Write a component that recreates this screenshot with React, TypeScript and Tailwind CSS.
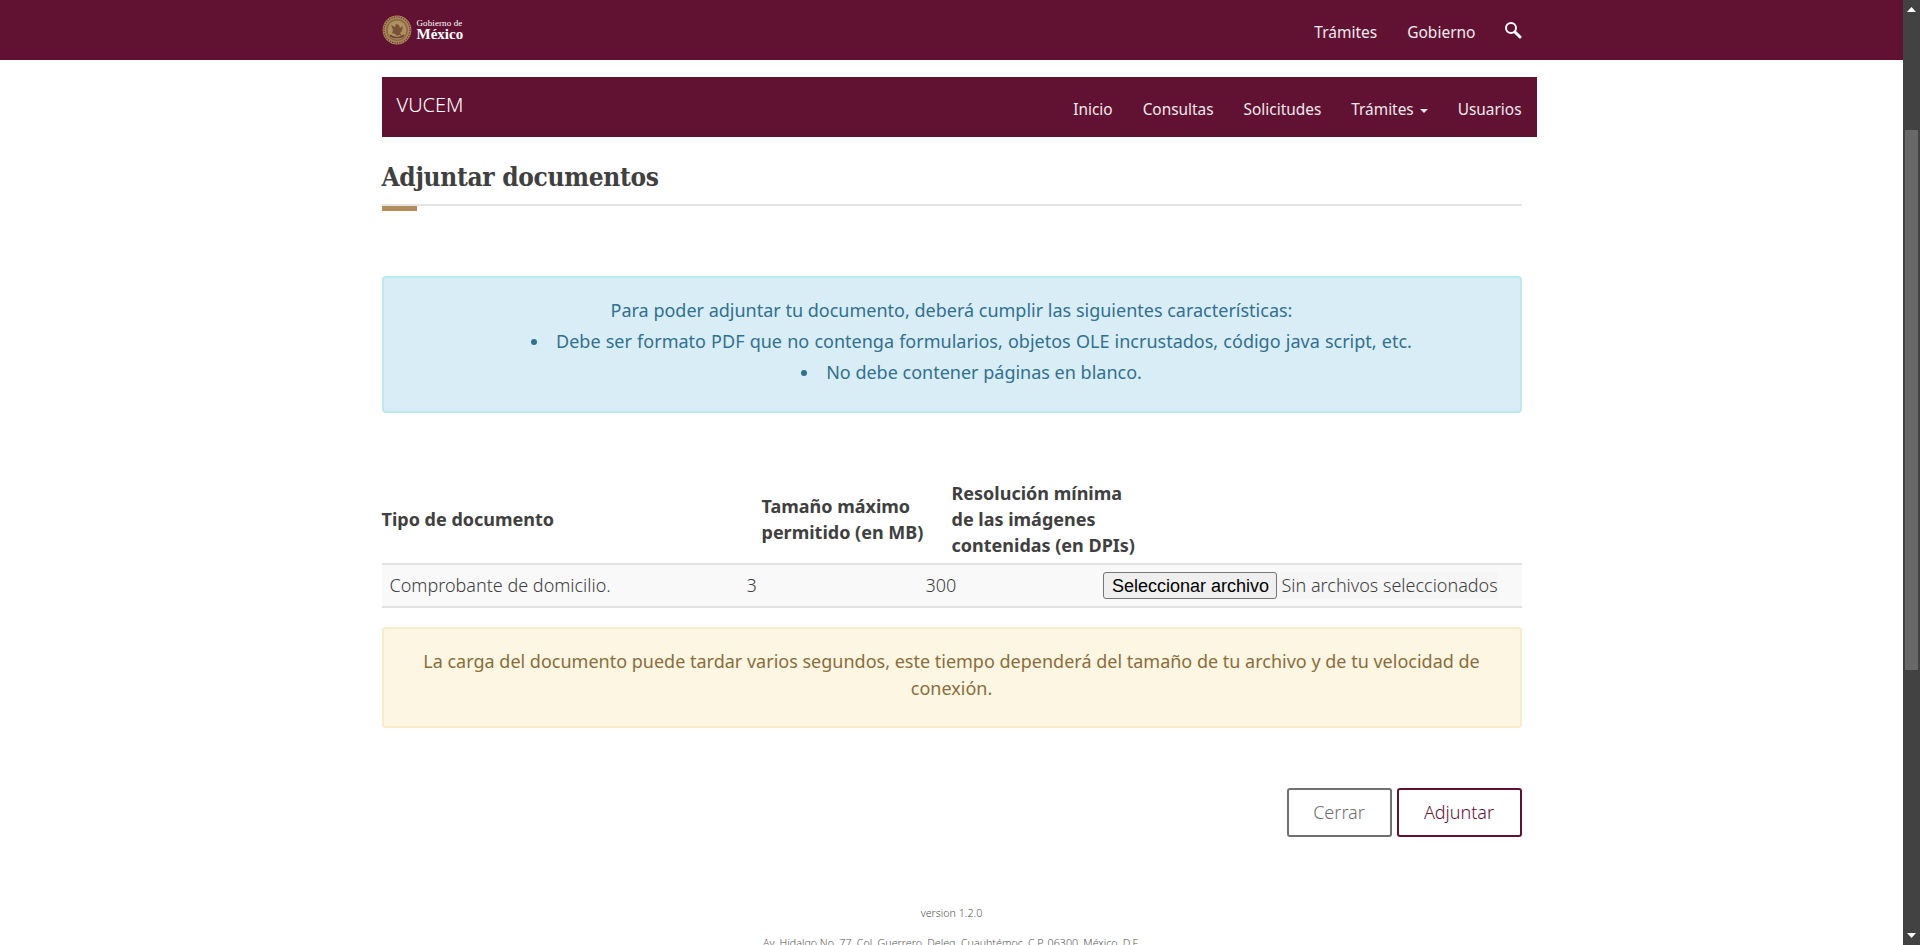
const NOTO = 'font-["Noto_Sans","Open_Sans",sans-serif]';

function Seal() {
  return (
    <svg width="30" height="30" viewBox="0 0 30 30" className="shrink-0">
      <circle cx="15" cy="15" r="14.4" fill="#a9875a" />
      <circle cx="15" cy="15" r="13" fill="none" stroke="#6d2f35" strokeWidth="1.2" strokeDasharray="1.2 1.2" />
      <circle cx="15" cy="15" r="11" fill="#8a6a45" />
      <circle cx="15" cy="15" r="9.4" fill="#b0905f" />
      <path d="M9 10l4 2 1-3 3 1 1 3 3-2-1 5-2 2 2 3-3-1-2 1-2-2-3-1 1-3z" fill="#7a5238" />
      <path d="M8 20c3 3.5 11 3.5 14 0" fill="none" stroke="#6d3a35" strokeWidth="1.2" />
    </svg>
  );
}

function SearchIcon() {
  return (
    <svg width="18" height="18" viewBox="0 0 18 18" fill="none" stroke="#fff" className="block">
      <circle cx="7" cy="7" r="5" strokeWidth="2" />
      <path d="M11 11l5 5" strokeWidth="3" strokeLinecap="round" />
    </svg>
  );
}

function Scrollbar() {
  return (
    <div className="flex w-[17px] shrink-0 flex-col items-center bg-[#424242]">
      <svg width="9" height="5" viewBox="0 0 9 5" className="mt-[7px] shrink-0">
        <path d="M0 5L4.5 0 9 5z" fill="#fff" />
      </svg>
      <div className="mt-[118px] h-[540px] w-[13px] shrink-0 bg-[#686868]" />
      <svg width="9" height="5" viewBox="0 0 9 5" className="mt-auto mb-[7px] shrink-0">
        <path d="M0 0L4.5 5 9 0z" fill="#fff" />
      </svg>
    </div>
  );
}

function App() {
  return (
    <div className={`flex h-[945px] overflow-hidden bg-white text-[#404041] ${NOTO}`}>
      <div className="min-w-0 flex-1 overflow-hidden">
        {/* barra gob.mx */}
        <header className="h-[60px] bg-[#611232] text-white">
          <div className="mx-auto flex h-full w-[1140px] items-center justify-between">
            <div className="flex items-center gap-[5px]">
              <Seal />
              <div className='font-["Liberation_Serif",serif] leading-none'>
                <div className="text-[9px] leading-[9px] tracking-[0.1px]">Gobierno de</div>
                <div className="text-[15px] leading-[13px] font-bold">México</div>
              </div>
            </div>
            <nav className="flex items-center text-[15.5px] text-[#f3e9ee]">
              <a className="mt-[6px] mr-[30px]">Trámites</a>
              <a className="mt-[6px] mr-[28px]">Gobierno</a>
              <SearchIcon />
            </nav>
          </div>
        </header>

        <main className="mx-auto w-[1140px]">
          {/* subnav */}
          <div className="mt-[17px] mr-[-15px] flex h-[60px] items-start justify-between bg-[#611232] px-[15px] text-white">
            <span className="mt-[14px] text-[20px] leading-[28px] font-light">VUCEM</span>
            <nav className="mt-[21px] flex items-center gap-[30px] text-[15.4px] leading-[23px] font-normal text-[#f3e9ee]">
              <a>Inicio</a>
              <a>Consultas</a>
              <a>Solicitudes</a>
              <a className="flex items-center gap-[6px]">
                Trámites
                <span className="mt-[2px] h-0 w-0 border-x-[4px] border-t-[4px] border-x-transparent border-t-[#f3e9ee]" />
              </a>
              <a>Usuarios</a>
            </nav>
          </div>

          <h1 className='mt-[22px] font-["DejaVu_Serif_Condensed","DejaVu_Serif",serif] text-[26px] leading-[36px] font-bold tracking-[-0.3px] text-[#404041]'>
            Adjuntar documentos
          </h1>
          <div className="mt-[9px] h-[2px] bg-[#e4e4e4]" />
          <div className="h-[5px] w-[35px] bg-[#b38e5d]" />

          {/* requisitos */}
          <div className="mt-[65px] h-[137px] rounded-[4px] border-2 border-[#bce8f1] bg-[#d9edf7] pt-[17px] text-center text-[18px] leading-[31px] text-[#31708f]">
            <p>Para poder adjuntar tu documento, deberá cumplir las siguientes características:</p>
            <ul className="list-inside list-disc pl-10">
              <li className="[word-spacing:0.5px]">Debe ser formato PDF que no contenga formularios, objetos OLE incrustados, código java script, etc.</li>
              <li>No debe contener páginas en blanco.</li>
            </ul>
          </div>

          {/* tabla */}
          <div className="mt-[65px] flex h-[85px] items-center pb-[1px] text-[18px] leading-[25.7px] font-bold text-[#404041]">
            <div className="w-[380px]">Tipo de documento</div>
            <div className="w-[190px]">
              Tamaño máximo
              <br />
              permitido (en MB)
            </div>
            <div>
              Resolución mínima
              <br />
              de las imágenes
              <br />
              contenidas (en DPIs)
            </div>
          </div>
          <div className="flex h-[45px] items-center border-y-2 border-[#e2e2e2] bg-[#f9f9f9] pb-[1px] pl-[8px] text-[18px] font-light text-[#404041]">
            <div className="w-[357px]">Comprobante de domicilio.</div>
            <div className="w-[179px]">3</div>
            <div className="w-[177px]">300</div>
            <div className="flex items-center bg-[#f6f6f6]">
              <button className="h-[27px] w-[174px] rounded-[3px] border border-[#767676] bg-[#efefef] pl-[2px] font-['Liberation_Sans',Arial,sans-serif] text-[18px] font-normal text-black">
                Seleccionar archivo
              </button>
              <span className="ml-[5px]">Sin archivos seleccionados</span>
            </div>
          </div>

          {/* aviso */}
          <div className="mt-[19px] flex h-[101px] items-center justify-center rounded-[4px] border-2 border-[#faebcc] bg-[#fdf6e3] px-[30px] pb-[6px] text-center text-[18px] leading-[27px] text-[#8a6d3b]">
            La carga del documento puede tardar varios segundos, este tiempo dependerá del tamaño de tu archivo y de tu velocidad de conexión.
          </div>

          <div className="mt-[60px] flex justify-end gap-[5px] text-[18px]">
            <button className="h-[49px] w-[105px] rounded-[3px] border-2 border-[#707070] bg-white font-light text-[#707070]">
              Cerrar
            </button>
            <button className="h-[49px] w-[125px] rounded-[3px] border-2 border-[#611232] bg-white font-light text-[#611232]">
              Adjuntar
            </button>
          </div>

          <footer className="mt-[68px] text-center text-[10.7px] font-light text-[#555]">
            <p className="leading-[16px]">version 1.2.0</p>
            <p className="mt-[14px] leading-[16px]">Av. Hidalgo No. 77, Col. Guerrero, Deleg. Cuauhtémoc, C.P. 06300, México, D.F.</p>
          </footer>
        </main>
      </div>
      <Scrollbar />
    </div>
  );
}

export default App;
